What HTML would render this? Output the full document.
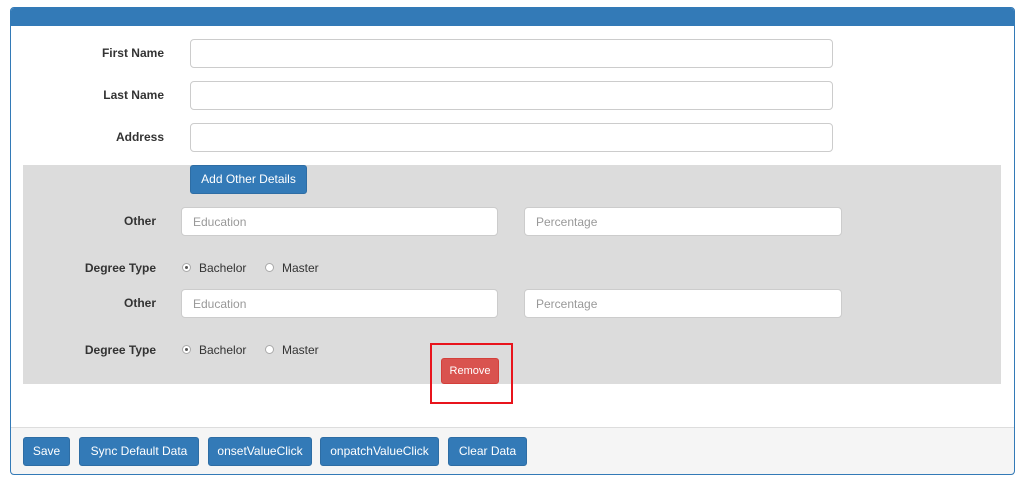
<!DOCTYPE html>
<html><head><style>
body{margin:0;width:1024px;height:482px;background:#fff;font-family:"Liberation Sans",Arial,sans-serif;font-size:12px;color:#333;position:relative;overflow:hidden}
.a{position:absolute}
.panel{left:10px;top:7px;width:1005px;height:468px;border:1px solid #337ab7;border-radius:4px;box-sizing:border-box;overflow:hidden;z-index:5}
.hdr{left:0;top:0;width:100%;height:18px;background:#337ab7}
.lbl{font-weight:bold;text-align:right;width:150px;font-size:12px}
.inp{border:1px solid #ccc;border-radius:4px;background:#fff;box-sizing:border-box;height:29px;color:#999;font-size:12px;padding:7px 11px}
.btn{background:#337ab7;color:#fff;border:1px solid #2e6da4;border-radius:3px;box-sizing:border-box;text-align:center;font-size:12px}
.rad{width:9px;height:9px;border:1px solid #aaa;border-radius:50%;box-sizing:border-box;background:#fff}
.rad.on::after{content:"";position:absolute;left:2px;top:2px;width:3px;height:3px;border-radius:50%;background:#555}
</style></head><body>
<div class="a" style="left:11px;top:427px;width:1003px;height:47px;background:#f5f5f5;border-top:1px solid #ddd"></div>
<div class="a panel">
<div class="a hdr"></div>
</div>
<div class="a lbl" style="left:14px;top:46px">First Name</div>
<div class="a lbl" style="left:14px;top:88px">Last Name</div>
<div class="a lbl" style="left:14px;top:130px">Address</div>
<div class="a inp" style="left:190px;top:39px;width:643px"></div>
<div class="a inp" style="left:190px;top:81px;width:643px"></div>
<div class="a inp" style="left:190px;top:123px;width:643px"></div>
<div class="a" style="left:23px;top:165px;width:978px;height:219px;background:#dcdcdc"></div>
<div class="a btn" style="left:190px;top:165px;width:117px;height:29px;line-height:27px">Add Other Details</div>
<div class="a lbl" style="left:6px;top:214px">Other</div>
<div class="a inp" style="left:181px;top:207px;width:317px">Education</div>
<div class="a inp" style="left:524px;top:207px;width:318px">Percentage</div>
<div class="a lbl" style="left:6px;top:261px">Degree Type</div>
<div class="a rad on" style="left:182px;top:263px"></div><div class="a" style="left:199px;top:261px">Bachelor</div>
<div class="a rad" style="left:265px;top:263px"></div><div class="a" style="left:282px;top:261px">Master</div>
<div class="a lbl" style="left:6px;top:296px">Other</div>
<div class="a inp" style="left:181px;top:289px;width:317px">Education</div>
<div class="a inp" style="left:524px;top:289px;width:318px">Percentage</div>
<div class="a lbl" style="left:6px;top:343px">Degree Type</div>
<div class="a rad on" style="left:182px;top:345px"></div><div class="a" style="left:199px;top:343px">Bachelor</div>
<div class="a rad" style="left:265px;top:345px"></div><div class="a" style="left:282px;top:343px">Master</div>
<div class="a" style="left:430px;top:343px;width:83px;height:61px;border:2px solid #e8141c;box-sizing:border-box"></div>
<div class="a btn" style="left:441px;top:358px;width:58px;height:26px;line-height:25px;background:#d9534f;border-color:#d43f3a;font-size:11px">Remove</div>
<div class="a btn" style="left:23px;top:437px;width:47px;height:29px;line-height:27px">Save</div>
<div class="a btn" style="left:79px;top:437px;width:120px;height:29px;line-height:27px">Sync Default Data</div>
<div class="a btn" style="left:208px;top:437px;width:104px;height:29px;line-height:27px">onsetValueClick</div>
<div class="a btn" style="left:320px;top:437px;width:119px;height:29px;line-height:27px">onpatchValueClick</div>
<div class="a btn" style="left:448px;top:437px;width:79px;height:29px;line-height:27px">Clear Data</div>
</body></html>
